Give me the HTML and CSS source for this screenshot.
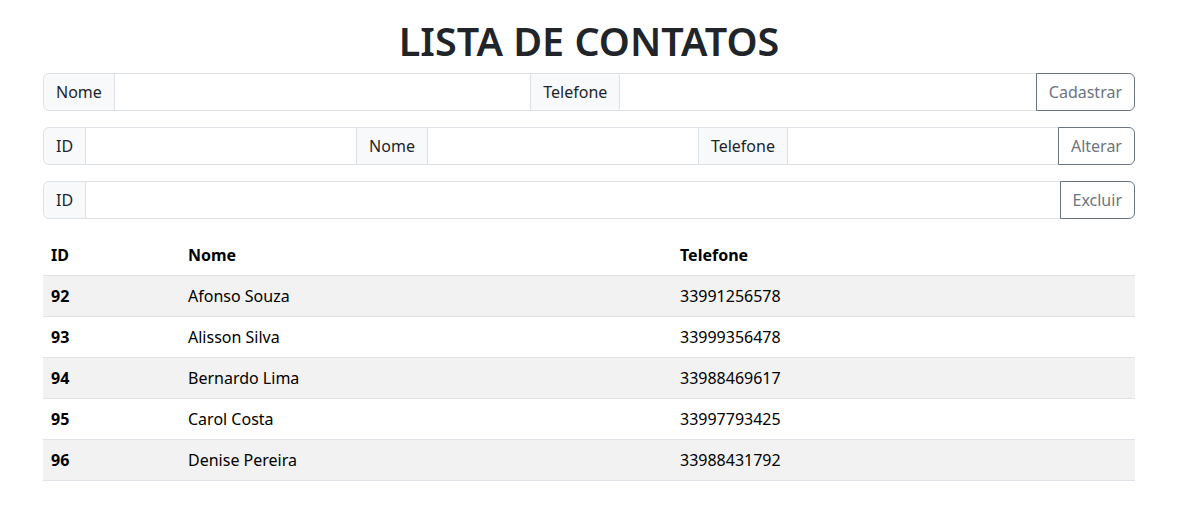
FILE: index.html
```html
<!DOCTYPE html>
<html lang="pt-BR">
<head>
<meta charset="utf-8">
<title>Lista de Contatos</title>
<link rel="stylesheet" href="styles.css">
</head>
<body>
<div class="container">
  <h1 class="title">LISTA DE CONTATOS</h1>

  <form class="input-group">
    <span class="addon">Nome</span>
    <input class="field" type="text">
    <span class="addon">Telefone</span>
    <input class="field" type="text">
    <button class="btn" type="button">Cadastrar</button>
  </form>

  <form class="input-group">
    <span class="addon">ID</span>
    <input class="field" type="text">
    <span class="addon">Nome</span>
    <input class="field" type="text">
    <span class="addon">Telefone</span>
    <input class="field" type="text">
    <button class="btn" type="button">Alterar</button>
  </form>

  <form class="input-group">
    <span class="addon">ID</span>
    <input class="field" type="text">
    <button class="btn" type="button">Excluir</button>
  </form>

  <table class="table">
    <colgroup>
      <col class="col-id">
      <col class="col-nome">
      <col class="col-tel">
    </colgroup>
    <thead>
      <tr><th>ID</th><th>Nome</th><th>Telefone</th></tr>
    </thead>
    <tbody>
      <tr><th>92</th><td>Afonso Souza</td><td>33991256578</td></tr>
      <tr><th>93</th><td>Alisson Silva</td><td>33999356478</td></tr>
      <tr><th>94</th><td>Bernardo Lima</td><td>33988469617</td></tr>
      <tr><th>95</th><td>Carol Costa</td><td>33997793425</td></tr>
      <tr><th>96</th><td>Denise Pereira</td><td>33988431792</td></tr>
    </tbody>
  </table>
</div>
</body>
</html>
```

FILE: styles.css
```css
* { box-sizing: border-box; }

body {
  margin: 0;
  background: #fff;
  color: #212529;
  font-family: "Noto Sans", "Open Sans", sans-serif;
  font-size: 16px;
  line-height: 1.5;
}

.container {
  padding: 0 50px 0 43px;
}

.title {
  margin: 0 0 8px;
  padding-top: 17px;
  text-align: center;
  font-size: 39.5px;
  font-weight: 600;
  line-height: 48px;
  color: #212529;
}

.input-group {
  display: flex;
  margin: 0 0 16px;
}

.addon {
  display: flex;
  align-items: center;
  padding: 6px 12px;
  font-size: 16px;
  line-height: 24px;
  background: #f8f9fa;
  border: 1px solid #dee2e6;
  white-space: nowrap;
}

.field {
  flex: 1 1 0;
  min-width: 0;
  height: 38px;
  padding: 6px 12px;
  font: inherit;
  border: 1px solid #dee2e6;
  background: #fff;
  margin-left: -1px;
}

.addon + .field { margin-left: -1px; }
.field + .addon { margin-left: -1px; }

.input-group > :first-child {
  border-radius: 6px 0 0 6px;
}

.btn {
  padding: 6px 12px;
  font: inherit;
  line-height: 24px;
  color: #6c757d;
  background: transparent;
  border: 1px solid #6c757d;
  border-radius: 0 6px 6px 0;
  margin-left: -1px;
  position: relative;
}

.table {
  width: 100%;
  border-collapse: collapse;
  margin-top: 16px;
  color: #000;
}

.col-id { width: 137px; }
.col-nome { width: 492px; }

.table th,
.table td {
  padding: 8px;
  text-align: left;
  line-height: 24px;
  border-bottom: 1px solid #dee2e6;
}

.table th { font-weight: 700; }
.table td { font-weight: 400; }

.table tbody tr:nth-child(odd) { background: #f2f2f2; }
```
